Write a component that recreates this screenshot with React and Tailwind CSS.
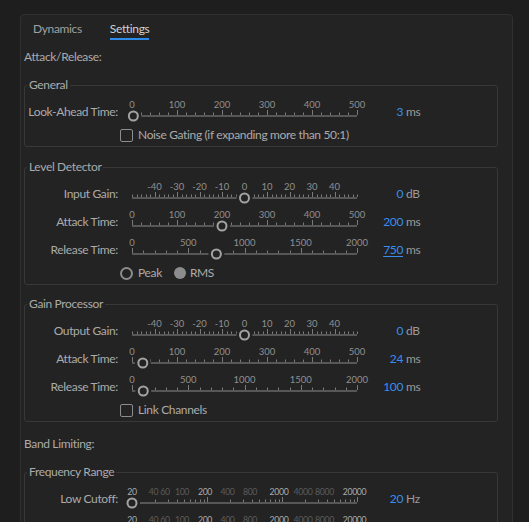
import React from "react";

// ticks for a linear scale, majors every majorStep (ends can be left minor)
function linTicks(min, max, step, majorStep, endsMinor = false) {
  const out = [];
  for (let v = min; v <= max + 1e-9; v += step) {
    let major = Math.abs(v % majorStep) < 1e-9;
    if (endsMinor && (v === min || v === max)) major = false;
    out.push({ v, major });
  }
  return out;
}

function freqTicks() {
  const out = [];
  [20, 200, 2000].forEach((base) => {
    for (let k = 1; k <= 10; k++) {
      if (base !== 20 && k === 1) continue;
      out.push({ v: base * k, major: k === 10 });
    }
  });
  return out;
}

function Slider({ min, max, value, log, labels, ticks, labelSize = 9.5 }) {
  const x0 = 10;
  const w = 225;
  const pos = (v) =>
    log
      ? x0 + (w * Math.log10(v / min)) / Math.log10(max / min)
      : x0 + (w * (v - min)) / (max - min);
  const tx = pos(value);

  return (
    <svg
      width="250"
      height="28"
      className="block shrink-0"
      fontFamily="Lato, 'Liberation Sans', sans-serif"
      letterSpacing={log ? "-0.35" : "0"}
    >
      {labels.map((l) => (
        <text
          key={l.t}
          x={l.x != null ? l.x : pos(l.v)}
          y="11.5"
          fontSize={labelSize}
          textAnchor="middle"
          fill={l.color || "#8f8f8f"}
        >
          {l.t}
        </text>
      ))}
      <rect x={x0} y="19" width={w} height="2" fill="#575757" />
      {ticks.map((t) => {
        const x = Math.round(pos(t.v)) + 0.5;
        return (
          <line key={t.v} x1={x} x2={x} y1={t.major ? 14 : 16.5} y2="19" stroke="#7a7a7a" strokeWidth="1" />
        );
      })}
      <circle cx={tx} cy="20" r="8" fill="#232323" />
      <circle cx={tx} cy="20" r="4.5" fill="none" stroke="#a3a3a3" strokeWidth="2" />
    </svg>
  );
}

function Row({ label, slider, value, unit, underline }) {
  return (
    <div className="flex h-[28px] items-start">
      <div className="w-[93px] pt-2 text-right leading-4">{label}</div>
      <div className="ml-1">{slider}</div>
      <div className={`w-[31px] pt-2 text-right leading-4 text-[#378ef0] ${underline ? "underline underline-offset-2" : ""}`}>
        {value}
      </div>
      <div className="ml-[3px] pt-2 leading-4 text-[#9a9a9a]">{unit}</div>
    </div>
  );
}

function Group({ title, children, className = "" }) {
  return (
    <fieldset className={`rounded-[3px] border border-[#383838] ${className}`}>
      <legend className="ml-[2px] px-[2px] leading-4 text-[#aaaaaa]">{title}</legend>
      <div className="pt-[3px]">{children}</div>
    </fieldset>
  );
}

function Check({ label }) {
  return (
    <div className="flex h-[22px] items-center pl-[95px]">
      <span className="h-[13px] w-[13px] rounded-[2px] border-[1.5px] border-[#8c8c8c]" />
      <span className="ml-[5px] leading-4">{label}</span>
    </div>
  );
}

const ms500 = {
  min: 0,
  max: 500,
  labels: [0, 100, 200, 300, 400, 500].map((v) => ({ v, t: String(v) })),
  ticks: linTicks(0, 500, 20, 100),
};

const ms2000 = {
  min: 0,
  max: 2000,
  labels: [0, 500, 1000, 1500, 2000].map((v) => ({ v, t: String(v) })),
  ticks: linTicks(0, 2000, 100, 500),
};

const gain = {
  min: -50,
  max: 50,
  labels: [-40, -30, -20, -10, 0, 10, 20, 30, 40].map((v) => ({ v, t: String(v) })),
  ticks: linTicks(-50, 50, 2, 10, true),
};

// label x positions read off the reference, relative to the slider box
const BRIGHT = "#ababab";
const DIM = "#5c5c5c";
const freq = {
  min: 20,
  max: 20000,
  log: true,
  labelSize: 8.75,
  labels: [
    { x: 10, t: "20", color: BRIGHT },
    { x: 31.5, t: "40", color: DIM },
    { x: 43, t: "60", color: DIM },
    { x: 60, t: "100", color: DIM },
    { x: 83, t: "200", color: BRIGHT },
    { x: 105.5, t: "400", color: DIM },
    { x: 128, t: "800", color: DIM },
    { x: 157, t: "2000", color: BRIGHT },
    { x: 181, t: "4000", color: DIM },
    { x: 202.5, t: "8000", color: DIM },
    { x: 232.5, t: "20000", color: BRIGHT },
  ],
  ticks: freqTicks(),
};

export default function App() {
  return (
    <div className="min-h-screen bg-[#1e1e1e] pl-[20px] pt-[14px] font-['Lato','Liberation_Sans',sans-serif] text-[12px] tracking-[-0.35px] text-[#ababab]">
      <div className="w-[493px] rounded-t-[4px] border border-[#303030] bg-[#232323] pb-10 pl-[3px] pr-[14px]">
        {/* Tabs */}
        <div className="flex gap-7 pl-[9px] pt-[6px]">
          <span className="border-b-2 border-transparent pb-px leading-4 text-[#a0a0a0]">Dynamics</span>
          <span className="border-b-2 border-[#2d8ceb] pb-px leading-4 text-[#d2d2d2]">Settings</span>
        </div>

        <div className="mt-[9px] leading-4">Attack/Release:</div>

        <Group title="General" className="mt-3">
          <Row label="Look-Ahead Time:" slider={<Slider {...ms500} value={3} />} value="3" unit="ms" />
          <Check label="Noise Gating (if expanding more than 50:1)" />
        </Group>

        <Group title="Level Detector" className="mt-3">
          <Row label="Input Gain:" slider={<Slider {...gain} value={0} />} value="0" unit="dB" />
          <Row label="Attack Time:" slider={<Slider {...ms500} value={200} />} value="200" unit="ms" />
          <Row label="Release Time:" slider={<Slider {...ms2000} value={750} />} value="750" unit="ms" underline />
          <div className="flex h-[22px] items-center pl-[95px]">
            <span className="h-[13px] w-[13px] rounded-full border-2 border-[#8c8c8c]" />
            <span className="ml-[5px] leading-4">Peak</span>
            <span className="ml-3 h-[12px] w-[12px] rounded-full bg-[#8c8c8c]" />
            <span className="ml-[4px] leading-4">RMS</span>
          </div>
        </Group>

        <Group title="Gain Processor" className="mt-[11px]">
          <Row label="Output Gain:" slider={<Slider {...gain} value={0} />} value="0" unit="dB" />
          <Row label="Attack Time:" slider={<Slider {...ms500} value={24} />} value="24" unit="ms" />
          <Row label="Release Time:" slider={<Slider {...ms2000} value={100} />} value="100" unit="ms" />
          <Check label="Link Channels" />
        </Group>

        <div className="mt-[14px] leading-4">Band Limiting:</div>

        <Group title="Frequency Range" className="mt-3">
          <Row label="Low Cutoff:" slider={<Slider {...freq} value={20} />} value="20" unit="Hz" />
          <Row label="High Cutoff:" slider={<Slider {...freq} value={20000} />} value="20000" unit="Hz" />
        </Group>
      </div>
    </div>
  );
}
